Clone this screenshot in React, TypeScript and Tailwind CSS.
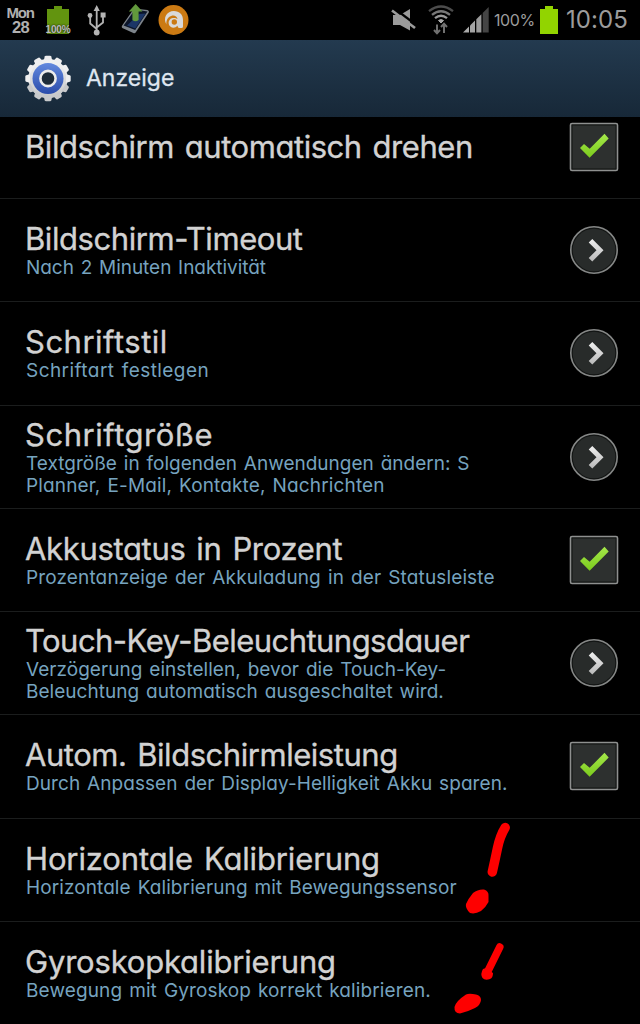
import React from "react";
import clsx from "clsx";

type Line = {
  text: string;
  tracking: string;
};

type Setting = {
  title: Line;
  summary?: Line[];
  control?: "check" | "more";
};

const SETTINGS: Setting[] = [
  {
    title: { text: "Bildschirm automatisch drehen", tracking: "tracking-[-0.45px]" },
    control: "check",
  },
  {
    title: { text: "Bildschirm-Timeout", tracking: "tracking-[-0.43px]" },
    summary: [{ text: "Nach 2 Minuten Inaktivität", tracking: "tracking-[-0.04px]" }],
    control: "more",
  },
  {
    title: { text: "Schriftstil", tracking: "tracking-[0.5px]" },
    summary: [{ text: "Schriftart festlegen", tracking: "tracking-[0.44px]" }],
    control: "more",
  },
  {
    title: { text: "Schriftgröße", tracking: "tracking-[0.52px]" },
    summary: [
      { text: "Textgröße in folgenden Anwendungen ändern: S", tracking: "tracking-[0.01px]" },
      { text: "Planner, E-Mail, Kontakte, Nachrichten", tracking: "tracking-[0.14px]" },
    ],
    control: "more",
  },
  {
    title: { text: "Akkustatus in Prozent", tracking: "tracking-[-0.33px]" },
    summary: [
      { text: "Prozentanzeige der Akkuladung in der Statusleiste", tracking: "tracking-[0.14px]" },
    ],
    control: "check",
  },
  {
    title: { text: "Touch-Key-Beleuchtungsdauer", tracking: "tracking-[-0.54px]" },
    summary: [
      { text: "Verzögerung einstellen, bevor die Touch-Key-", tracking: "tracking-[0.04px]" },
      { text: "Beleuchtung automatisch ausgeschaltet wird.", tracking: "tracking-[0.03px]" },
    ],
    control: "more",
  },
  {
    title: { text: "Autom. Bildschirmleistung", tracking: "tracking-[-0.46px]" },
    summary: [
      { text: "Durch Anpassen der Display-Helligkeit Akku sparen.", tracking: "tracking-[0.06px]" },
    ],
    control: "check",
  },
  {
    title: { text: "Horizontale Kalibrierung", tracking: "tracking-[-0.13px]" },
    summary: [
      { text: "Horizontale Kalibrierung mit Bewegungssensor", tracking: "tracking-[0.09px]" },
    ],
  },
  {
    title: { text: "Gyroskopkalibrierung", tracking: "tracking-[-0.2px]" },
    summary: [
      { text: "Bewegung mit Gyroskop korrekt kalibrieren.", tracking: "tracking-[0.12px]" },
    ],
  },
];

function UsbIcon() {
  return (
    <svg width="20" height="32" viewBox="0 0 20 32" fill="none" stroke="#b4b4b4" strokeWidth="1.8">
      <path d="M9.7 6V28M9.7 25L3.2 19.5V13M9.7 23.5L16 18.5V13" />
      <path d="M9.7 1L12.8 7H6.6Z" fill="#b4b4b4" stroke="none" />
      <circle cx="3" cy="11.5" r="2.4" fill="#b4b4b4" stroke="none" />
      <path d="M13.6 8.5h5v5h-5z" fill="#b4b4b4" stroke="none" />
      <circle cx="9.7" cy="28.5" r="2.9" fill="#b4b4b4" stroke="none" />
    </svg>
  );
}

function PhoneUploadIcon() {
  return (
    <svg width="30" height="32" viewBox="0 0 30 32">
      <path d="M13 4.500L26.500 6Q28.500 6.800 27.800 8.500L15 28Q14 29.800 12.300 29L1.300 24Q.2 23.300 1 21.800Z" fill="#7d848b" />
      <path d="M14 5.500L26.500 7.500L14.200 26L2.600 21.500Z" fill="#0b1529" />
      <path d="M18 10L24.500 9.500L14.300 24.500L6 21.400Z" fill="#1b3566" />
      <path d="M14.600 0L21.400 7.500H17.600V16Q14.500 18.500 11.400 16V7.500H7.800Z" fill="#62993c" />
    </svg>
  );
}

function AvastIcon() {
  return (
    <svg width="31" height="32" viewBox="0 0 31 32">
      <circle cx="15.5" cy="16" r="15" fill="#cb7a13" />
      <path
        d="M8.500 20.500C4.500 14 9 7 15.800 7C21.500 7 25 10.500 25 16V22.500Q25 24 23.500 24H21.500Q19.500 24 19.500 21.800C17.500 24 14.500 24.300 12.300 22.500C9.500 20 10.500 15.500 13.800 14.300C16 13.500 18.300 14 19.500 15C19 12 16 10.800 13.200 11.900C9.500 13.300 8 16.500 8.500 20.500Z"
        fill="#d9d9d9"
      />
      <circle cx="16.300" cy="18" r="2.700" fill="#cb7a13" />
    </svg>
  );
}

function MuteIcon() {
  return (
    <svg width="26" height="24" viewBox="0 0 26 24">
      <path d="M2 7H9L19 1V22.500L9 17H2Z" fill="#9b9b9b" />
      <path d="M3.500 .5L26 17.500" stroke="#000" strokeWidth="2.2" />
      <path d="M1 2.500L24 20" stroke="#9b9b9b" strokeWidth="2.6" />
    </svg>
  );
}

function WifiIcon() {
  return (
    <svg width="26" height="30" viewBox="0 0 26 30" fill="none" strokeWidth="2.3">
      <path d="M1 6.200Q13 -3.200 25 6.200" stroke="#4c4c4c" />
      <path d="M4 9.900Q13 2.500 22 9.900" stroke="#777" />
      <path d="M7 13.200Q13 8.200 19 13.200" stroke="#999" />
      <path d="M10.500 15.500Q13 13.700 15.500 15.500L13 18Z" fill="#a8a8a8" stroke="#a8a8a8" strokeWidth="1" />
      <path d="M9 19.500V28M6 25L9 28.200L12 25M16 28V19.500M13 22L16 18.800L19 22" stroke="#707070" strokeWidth="2" />
    </svg>
  );
}

function SignalIcon() {
  return (
    <svg width="26" height="26" viewBox="0 0 26 26">
      <path d="M0 25.5L6 19.5V25.5Z" fill="#aaa" />
      <path d="M7 18.5L12 13.5V25.5H7Z" fill="#a4a4a4" />
      <path d="M13.3 12.3L18.4 7.2V25.5H13.3Z" fill="#9a9a9a" />
      <path d="M19.7 6L25.7 0V25.5H19.7Z" fill="#444" />
    </svg>
  );
}

function GearIcon() {
  const teeth = Array.from({ length: 12 }, (_, i) => i * 30);
  return (
    <svg width="46" height="48" viewBox="0 0 46 48">
      <defs>
        <linearGradient id="metal" gradientUnits="userSpaceOnUse" x1="0" y1="0" x2="0" y2="48">
          <stop offset="0" stopColor="#fafafa" />
          <stop offset="1" stopColor="#bfc0c2" />
        </linearGradient>
        <linearGradient id="disc" x1="0" y1="0" x2="0" y2="1">
          <stop offset="0" stopColor="#6389de" />
          <stop offset="1" stopColor="#2a4cab" />
        </linearGradient>
      </defs>
      <circle cx="23" cy="23.500" r="19.800" fill="url(#metal)" />
      {teeth.map((angle) => (
        <path
          key={angle}
          d="M18.800 5.500L19.700 1.600Q20 .8 21 .8H25Q26 .8 26.300 1.600L27.200 5.500Z"
          fill={angle > 90 && angle < 270 ? "#c8c9cb" : "#efeff0"}
          transform={`rotate(${angle} 23 23.500)`}
        />
      ))}
      <circle cx="23" cy="23.500" r="15.500" fill="url(#disc)" />
      <circle cx="23" cy="23.500" r="7.600" fill="#1d2c3a" stroke="#ececec" strokeWidth="2.6" />
    </svg>
  );
}

function CheckControl() {
  return (
    <svg width="50" height="50" viewBox="0 0 50 50">
      <defs>
        <linearGradient id="tick" x1="0" y1="0" x2="0" y2="1">
          <stop offset="0" stopColor="#a5e84a" />
          <stop offset="1" stopColor="#7bcb1d" />
        </linearGradient>
      </defs>
      <rect x="1.500" y="1.500" width="47" height="47" rx="1.500" fill="#121413" stroke="#8e908f" strokeWidth="1.6" />
      <rect x="3.500" y="3.500" width="43" height="43" fill="#2d302f" />
      <path d="M11 26L15 22L20.700 26.800L35.500 11.800L39.700 16.500L20.600 35.800Z" fill="url(#tick)" />
    </svg>
  );
}

function MoreControl() {
  return (
    <svg width="50" height="50" viewBox="0 0 50 50">
      <defs>
        <linearGradient id="chevron" x1="0" y1="0" x2="0" y2="1">
          <stop offset="0" stopColor="#f0f0f0" />
          <stop offset="1" stopColor="#b8b8b8" />
        </linearGradient>
      </defs>
      <circle cx="25" cy="25" r="23.200" fill="#121413" stroke="#858786" strokeWidth="1.6" />
      <circle cx="25" cy="25" r="21.300" fill="#282b2a" />
      <path d="M23.300 14L34.500 25.200L23.300 36.500L19.700 33L27.500 25.200L19.700 17.500Z" fill="url(#chevron)" />
    </svg>
  );
}

function StatusBar() {
  return (
    <header className="flex h-10 shrink-0 items-center justify-between bg-black pr-3 pl-[6px]">
      <div className="flex items-center">
        <p className="w-[29px] text-center font-['Liberation_Sans'] text-[16.5px] leading-[15px] font-bold tracking-[-0.8px] text-[#b0b0b0]">
          <span className="-ml-px text-[15px] tracking-[-1.2px]">Mon</span>
          <br />
          28
        </p>
        <div className="ml-[11px] flex h-7 w-6 flex-col items-center">
          <div className="h-[3px] w-2 bg-[#62940f]" />
          <div className="flex w-[22px] flex-1 items-end justify-center bg-[#62940f]">
            <span className="font-['Liberation_Sans'] text-[10px] leading-[9px] font-bold tracking-[-0.2px] text-[#bcbcbc] [text-shadow:0_0_2px_#000]">
              100%
            </span>
          </div>
        </div>
        <div className="ml-[17px]"><UsbIcon /></div>
        <div className="ml-[14px]"><PhoneUploadIcon /></div>
        <div className="ml-[7px]"><AvastIcon /></div>
      </div>
      <div className="flex items-center text-[#9c9c9c]">
        <div className="-mr-[3px]"><MuteIcon /></div>
        <div className="ml-[14px]"><WifiIcon /></div>
        <div className="ml-[9px]"><SignalIcon /></div>
        <span className="ml-[5px] text-base tracking-[-0.35px]">100%</span>
        <div className="ml-[5px] flex h-7 w-[18px] flex-col items-center">
          <div className="h-[3px] w-2 bg-[#92d400]" />
          <div className="w-full flex-1 bg-[#92d400]" />
        </div>
        <span className="ml-[8px] text-2xl tracking-[0.1px]">10:05</span>
      </div>
    </header>
  );
}

function SettingRow({ setting }: { setting: Setting }) {
  const { title, summary, control } = setting;
  return (
    <li className="flex h-[103.25px] shrink-0 items-center justify-between border-b border-[#1b1d1d] pr-[21px] pl-[25px]">
      <div className={clsx("whitespace-nowrap", summary && "pb-px")}>
        <h2
          className={clsx(
            "text-[31px] leading-[37px] font-normal text-[#d2d2d2] [-webkit-text-stroke:0.35px_#d2d2d2] [word-spacing:2.5px]",
            title.tracking
          )}
        >
          {title.text}
        </h2>
        {summary?.map((line) => (
          <p
            key={line.text}
            className={clsx(
              "pl-px text-[19px] leading-[22px] text-[#76a3bf] [word-spacing:1.5px]",
              line.tracking
            )}
          >
            {line.text}
          </p>
        ))}
      </div>
      {control === "check" && <CheckControl />}
      {control === "more" && <MoreControl />}
    </li>
  );
}

function Marks() {
  return (
    <svg
      className="absolute top-[810px] left-[440px]"
      width="100"
      height="214"
      viewBox="0 0 100 214"
      fill="#fe0000"
      stroke="#fe0000"
      strokeLinecap="round"
    >
      <path d="M65.200 17.500Q60 26 57.500 38T52.300 62" fill="none" strokeWidth="9.5" />
      <path d="M33 83Q38 79 44 79.500Q49 81 48.500 86V92Q46 97 41 101Q35 104.500 30 103Q25 98 26 94Q28 89 33 83Z" stroke="none" />
      <path d="M59.800 137L47 163" fill="none" strokeWidth="7.5" />
      <path d="M46 158L53 163Q53 168 50 169Q45 171 42.500 168Q40 164 43 159Z" stroke="none" />
      <path d="M26 184.500Q29 183 36 184.500Q41 185.500 41 190Q40.500 195 35 198Q27 202 20 203.500Q14 203 14.500 197Q16 191 26 184.500Z" stroke="none" />
    </svg>
  );
}

export default function App() {
  return (
    <div className="relative flex h-[1024px] w-[640px] flex-col overflow-hidden bg-black font-['Inter','Liberation_Sans',sans-serif] [font-feature-settings:'cv11']">
      <StatusBar />
      <div className="flex h-[77px] shrink-0 items-center gap-[15px] bg-linear-to-b from-[#233a4f] to-[#172838] pl-[25px]">
        <GearIcon />
        <h1 className="text-[23px] font-normal text-[#dfe6f0] [-webkit-text-stroke:0.3px_#dfe6f0]">Anzeige</h1>
      </div>
      <main className="min-h-0 flex-1 overflow-hidden">
        <ul className="-mt-[21.25px] flex flex-col">
          {SETTINGS.map((setting) => (
            <SettingRow key={setting.title.text} setting={setting} />
          ))}
        </ul>
      </main>
      <Marks />
    </div>
  );
}
